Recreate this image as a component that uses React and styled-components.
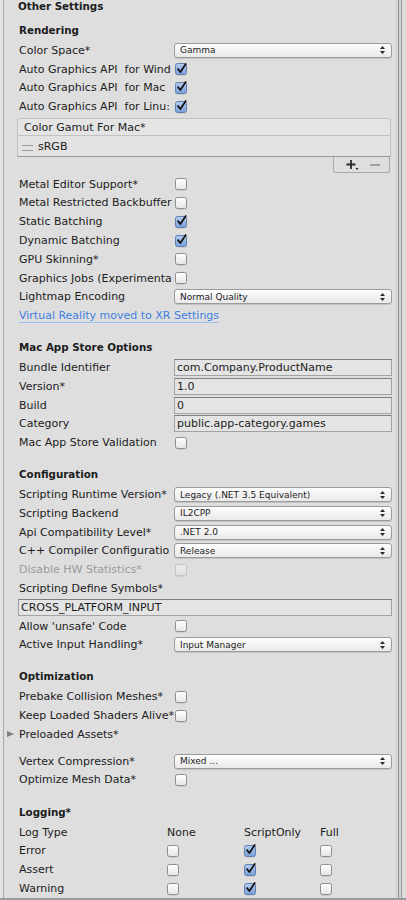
import React from 'react';
import styled, { createGlobalStyle } from 'styled-components';

const GlobalStyle = createGlobalStyle`
  html, body { margin: 0; padding: 0; }
  body {
    background: #dedede;
    font-family: "DejaVu Sans", "Liberation Sans", sans-serif;
    color: #1c1c1c;
  }
`;

const Window = styled.div`
  display: flex;
  width: 406px;
  height: 900px;
  box-sizing: border-box;
  overflow: hidden;
  background: #dedede;
  border-bottom: 2px solid #9a9a9a;
`;

const Gutter = styled.div`
  flex: none;
  width: 3px;
  background: #e3e3e3;
`;

const Panel = styled.div`
  flex: 1;
  min-width: 0;
  border-left: 1px solid #a9a9a9;
  border-right: 1px solid #cacaca;
  padding: 0 4px 0 15px;
`;

const Scrollbar = styled.div`
  flex: none;
  width: 9px;
  background: linear-gradient(
    to right,
    #dedede 0 1px,
    #8d8d8d 1px 2px,
    #d3d3d3 2px 4px,
    #9c9c9c 4px 5px,
    #dcdcdc 5px
  );
`;

const Title = styled.div`
  height: 12px;
  line-height: 12px;
  margin-left: -1px;
  font-size: 10.3px;
  font-weight: bold;
`;

const SectionHeader = styled.div`
  display: flex;
  align-items: center;
  height: 22px;
  margin-top: ${(p) => p.$gap}px;
  font-size: 10.3px;
  font-weight: bold;
`;

const Group = styled.div`
  margin-top: ${(p) => p.$gap || 0}px;
`;

const Row = styled.div`
  position: relative;
  display: grid;
  grid-template-columns: 155px 1fr;
  align-items: center;
  height: 18.8px;
  font-size: 11px;
`;

const Label = styled.div`
  white-space: pre;
  overflow: hidden;
  color: ${(p) => (p.$disabled ? '#9b9b9b' : '#1c1c1c')};
`;

const Foldout = styled.span`
  position: absolute;
  left: -12px;
  top: 6px;
  width: 0;
  height: 0;
  border-top: 3.5px solid transparent;
  border-bottom: 3.5px solid transparent;
  border-left: 7px solid #7d7d7d;
`;

const Box = styled.span`
  display: flex;
  align-items: center;
  justify-content: center;
  width: 12px;
  height: 12px;
  box-sizing: border-box;
  margin-left: ${(p) => (p.$flush ? 0 : 1)}px;
  border-radius: 2.5px;
  border: 1px solid ${(p) => (p.$checked ? '#5d7fae' : p.$disabled ? '#c4c4c4' : '#8e8e8e')};
  background: ${(p) =>
    p.$checked
      ? 'linear-gradient(#b3cbee, #7aa0da)'
      : p.$disabled
      ? 'linear-gradient(#ebebeb, #e0e0e0)'
      : 'linear-gradient(#ffffff, #e6e6e6)'};
  box-shadow: 0 0.5px 0.5px rgba(0, 0, 0, 0.15);
  overflow: visible;
`;

const Checkbox = ({ checked, disabled, flush }) => (
  <Box $checked={checked} $disabled={disabled} $flush={flush}>
    {checked && (
      <svg width="12" height="13" viewBox="0 0 12 13" style={{ marginTop: -2, marginRight: -1 }}>
        <path d="M2.2 7.2 L4.8 10.4 L10.6 1.6" fill="none" stroke="#111" strokeWidth="1.9" strokeLinecap="round" strokeLinejoin="round" />
      </svg>
    )}
  </Box>
);

const Select = styled.div`
  display: flex;
  align-items: center;
  justify-content: space-between;
  height: 15px;
  box-sizing: border-box;
  padding: 0 6px 0 5px;
  border: 1px solid #9b9b9b;
  border-radius: 3px;
  background: linear-gradient(#fdfdfd, #e9e9e9);
  box-shadow: 0 1px 0 rgba(0, 0, 0, 0.12);
  font-size: 9px;
  white-space: pre;
`;

const Dropdown = ({ value }) => (
  <Select>
    <span>{value}</span>
    <svg width="5" height="8" viewBox="0 0 5 8">
      <path d="M2.5 0 L5 3 L0 3 Z M2.5 8 L5 5 L0 5 Z" fill="#2a2a2a" />
    </svg>
  </Select>
);

const TextField = styled.div`
  display: flex;
  align-items: center;
  height: 17px;
  box-sizing: border-box;
  padding-left: 2px;
  border: 1px solid #a2a2a2;
  border-top-color: #7f7f7f;
  background: #e4e4e4;
  font-size: 11px;
  white-space: pre;
`;

const WideField = styled(TextField)`
  grid-column: 1 / -1;
  margin: 1px 0 0 -1px;
  width: calc(100% + 1px);
`;

const Link = styled.span`
  color: #3d80e2;
  border-bottom: 1px solid #9cc0f0;
  line-height: 13px;
  white-space: pre;
  justify-self: start;
  grid-column: 1 / -1;
`;

const GamutBox = styled.div`
  margin: 2px 0 0 -2px;
  width: calc(100% + 1px);
`;

const GamutHead = styled.div`
  display: flex;
  align-items: center;
  height: 18px;
  box-sizing: border-box;
  padding-left: 6px;
  border: 1px solid #c2c2c2;
  border-radius: 3px 3px 0 0;
  background: #e4e4e4;
  font-size: 11px;
`;

const GamutItem = styled.div`
  display: flex;
  align-items: center;
  gap: 5px;
  height: 21px;
  box-sizing: border-box;
  padding-left: 4px;
  border: 1px solid #c2c2c2;
  border-top: none;
  border-bottom: 1px solid #9a9a9a;
  background: #e2e2e2;
  font-size: 11px;
`;

const Handle = styled.span`
  display: inline-block;
  width: 11px;
  height: 4px;
  border-top: 1px solid #9a9a9a;
  border-bottom: 1px solid #9a9a9a;
  margin-top: 3px;
`;

const GamutFooter = styled.div`
  display: flex;
  justify-content: flex-end;
`;

const FooterButtons = styled.div`
  display: flex;
  align-items: center;
  justify-content: space-around;
  width: 57px;
  height: 16px;
  box-sizing: border-box;
  margin-right: 1px;
  border: 1px solid #a9a9a9;
  border-top: none;
  border-radius: 0 0 3px 3px;
  padding: 0 4px 0 8px;
`;

const LogRow = styled.div`
  display: grid;
  grid-template-columns: 148px 77px 76px 1fr;
  align-items: center;
  height: 18.8px;
  font-size: 11px;
`;

const Plus = () => (
  <svg width="14" height="12" viewBox="0 0 14 12">
    <path d="M5 1 V10 M0.5 5.5 H9.5" stroke="#2a2a2a" strokeWidth="1.8" />
    <path d="M9.5 9 L12.5 9 L11 11 Z" fill="#2a2a2a" />
  </svg>
);

const Minus = () => (
  <svg width="12" height="12" viewBox="0 0 12 12">
    <path d="M1 6 H11" stroke="#8a8a8a" strokeWidth="1.5" />
  </svg>
);

const CheckRow = ({ label, checked, disabled }) => (
  <Row>
    <Label $disabled={disabled}>{label}</Label>
    <Checkbox checked={checked} disabled={disabled} />
  </Row>
);

const SelectRow = ({ label, value }) => (
  <Row>
    <Label>{label}</Label>
    <Dropdown value={value} />
  </Row>
);

const FieldRow = ({ label, value }) => (
  <Row>
    <Label>{label}</Label>
    <TextField>{value}</TextField>
  </Row>
);

const LogLine = ({ label, values }) => (
  <LogRow>
    <Label>{label}</Label>
    {values.map((v, i) => (
      <span key={i}>
        <Checkbox checked={v} flush />
      </span>
    ))}
  </LogRow>
);

export default function App() {
  return (
    <>
      <GlobalStyle />
      <Window>
        <Gutter />
        <Panel>
          <Title>Other Settings</Title>

          <SectionHeader $gap={7}>Rendering</SectionHeader>
          <SelectRow label="Color Space*" value="Gamma" />
          <CheckRow label="Auto Graphics API  for Wind" checked />
          <CheckRow label="Auto Graphics API  for Mac" checked />
          <CheckRow label="Auto Graphics API  for Linu:" checked />

          <GamutBox>
            <GamutHead>Color Gamut For Mac*</GamutHead>
            <GamutItem>
              <Handle />
              sRGB
            </GamutItem>
            <GamutFooter>
              <FooterButtons>
                <Plus />
                <Minus />
              </FooterButtons>
            </GamutFooter>
          </GamutBox>

          <Group $gap={1.6}>
            <CheckRow label="Metal Editor Support*" />
            <CheckRow label="Metal Restricted Backbuffer" />
            <CheckRow label="Static Batching" checked />
            <CheckRow label="Dynamic Batching" checked />
            <CheckRow label="GPU Skinning*" />
            <CheckRow label="Graphics Jobs (Experimenta" />
            <SelectRow label="Lightmap Encoding" value="Normal Quality" />
            <Row>
              <Link>Virtual Reality moved to XR Settings</Link>
            </Row>
          </Group>

          <SectionHeader $gap={11}>Mac App Store Options</SectionHeader>
          <FieldRow label="Bundle Identifier" value="com.Company.ProductName" />
          <FieldRow label="Version*" value="1.0" />
          <FieldRow label="Build" value="0" />
          <FieldRow label="Category" value="public.app-category.games" />
          <CheckRow label="Mac App Store Validation" />

          <SectionHeader $gap={11}>Configuration</SectionHeader>
          <SelectRow label="Scripting Runtime Version*" value="Legacy (.NET 3.5 Equivalent)" />
          <SelectRow label="Scripting Backend" value="IL2CPP" />
          <SelectRow label="Api Compatibility Level*" value=".NET 2.0" />
          <SelectRow label="C++ Compiler Configuratio" value="Release" />
          <CheckRow label="Disable HW Statistics*" disabled />
          <Row>
            <Label>Scripting Define Symbols*</Label>
          </Row>
          <Row>
            <WideField>CROSS_PLATFORM_INPUT</WideField>
          </Row>
          <CheckRow label="Allow 'unsafe' Code" />
          <SelectRow label="Active Input Handling*" value="Input Manager" />

          <SectionHeader $gap={11}>Optimization</SectionHeader>
          <CheckRow label="Prebake Collision Meshes*" />
          <CheckRow label="Keep Loaded Shaders Alive*" />
          <Row>
            <Foldout />
            <Label>Preloaded Assets*</Label>
          </Row>
          <Group $gap={8}>
            <SelectRow label="Vertex Compression*" value="Mixed ..." />
            <CheckRow label="Optimize Mesh Data*" />
          </Group>

          <SectionHeader $gap={11.5}>Logging*</SectionHeader>
          <LogRow>
            <Label>Log Type</Label>
            <span>None</span>
            <span>ScriptOnly</span>
            <span>Full</span>
          </LogRow>
          <LogLine label="Error" values={[false, true, false]} />
          <LogLine label="Assert" values={[false, true, false]} />
          <LogLine label="Warning" values={[false, true, false]} />
        </Panel>
        <Scrollbar />
      </Window>
    </>
  );
}
